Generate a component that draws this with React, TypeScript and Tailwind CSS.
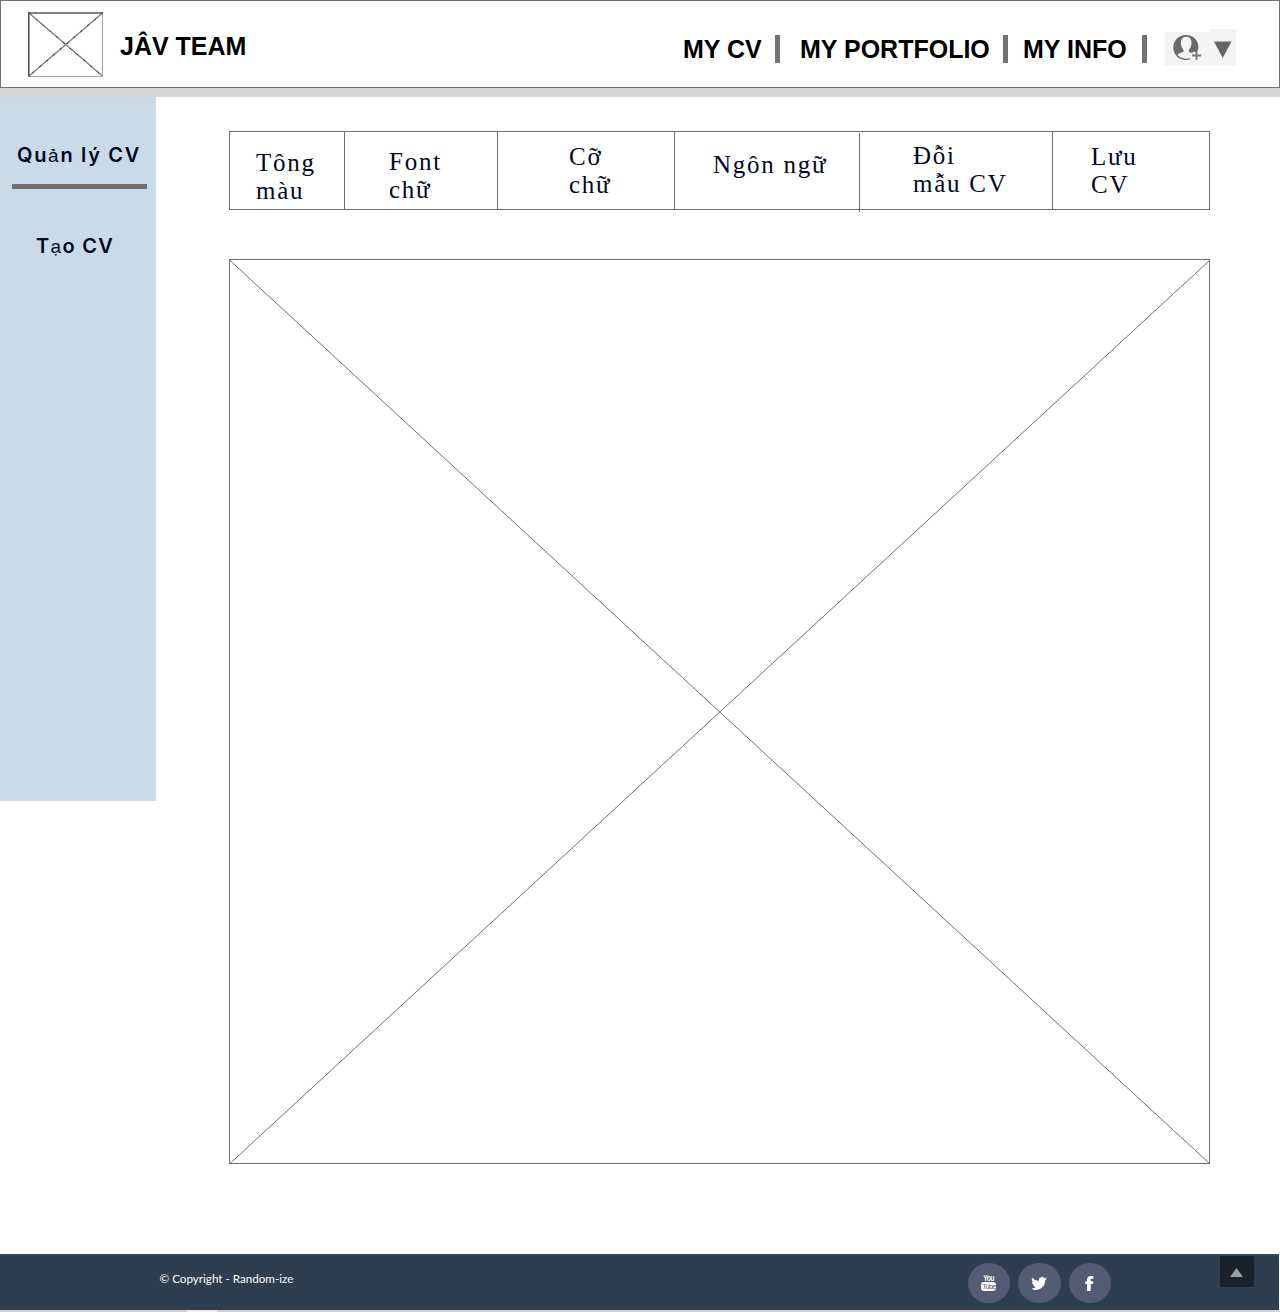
import type { ReactNode } from "react";

function Logo() {
  return (
    <svg className="ml-[27px] mt-[11px] h-[66px] w-[76px]" viewBox="0 0 76 66" fill="none">
      <path d="M1 1 74.500 64M74.500 1 1 64" stroke="#777" strokeWidth="1.2" />
      <path d="M1 1 74.500 64M74.500 1 1 64" stroke="#222" strokeWidth="1" strokeDasharray="2 7" />
      <path d="M74.500 1V65M1 64.500H75" stroke="#aaa" strokeWidth="1.200" />
      <path d="M.8 65V0M0 1H75" stroke="#5a5a5a" strokeWidth="1.600" />
    </svg>
  );
}

function Divider({ className }: { className: string }) {
  return <div className={`h-7 w-[5px] shrink-0 bg-[#737373] ${className}`} />;
}

function Account() {
  return (
    <div className="ml-[18px] mt-[28px] flex items-end">
      <svg className="h-[34px] w-[44px] bg-[#f4f4f4]" viewBox="0 0 44 34">
        <path
          fill="#6a6a6a"
          fillRule="evenodd"
          d="M21 3A12.500 12.500 0 0 0 8.300 15.500C8.300 22.500 14 28 21 28c1.500 0 3-.2 4.500-.8l-.5-.9c-4.500 1.200-9.500 0-12.800-3.600 1.500-1.300 4-1.800 5.800-2.600.8-.5.800-1.700.100-2.700-1.600-2.200-2.400-4.400-2.200-7 .2-3.500 2.200-5.600 5.300-5.600s5.200 2.100 5.300 5.600c.1 2.600-.8 4.800-2.300 7-.8 1.200-.6 2.300.5 2.800l3 1.100v-1.600h2.300l1.300 1.200c1.500-2 2.100-4 2.100-6.100C33.400 8.300 28 3 21 3Z"
        />
        <path d="M31.500 19v9M27 23.500h9" stroke="#777" strokeWidth="1.8" />
      </svg>
      <svg className="h-[37px] w-[27px] bg-[#f4f4f4]" viewBox="0 0 27 37">
        <path d="M5 12.500H22.500L13.700 29Z" fill="#666" />
      </svg>
    </div>
  );
}

function Header() {
  return (
    <header className="flex h-[97px] border-b-[9px] border-[#d6d6d6] font-['Liberation_Sans',sans-serif] text-[25px] leading-7 font-bold text-black">
      <div className="flex h-[88px] w-full items-start border border-[#707070] whitespace-nowrap">
        <Logo />
        <h1 className="mt-[31px] ml-[16px] w-[563px]">JÂV TEAM</h1>
        <div className="mt-[34px] w-[92px]">MY CV</div>
        <Divider className="mt-[34px]" />
        <div className="mt-[34px] ml-[20px] w-[203px]">MY PORTFOLIO</div>
        <Divider className="mt-[34px]" />
        <div className="mt-[34px] ml-[15px] w-[119px]">MY INFO</div>
        <Divider className="mt-[34px]" />
        <Account />
      </div>
    </header>
  );
}

function Sidebar() {
  return (
    <aside className="h-[704px] w-[156px] shrink-0 bg-[#c9dbe9] pt-[44px] font-[Inter,sans-serif] text-[20px] leading-7 font-semibold whitespace-nowrap text-[#00081f]">
      <div className="h-7 pl-[17px] tracking-[1.7px]">
        Qu<span className="font-['Liberation_Sans',sans-serif] text-[19px] font-normal">ả</span>n lý CV
      </div>
      <div className="mt-[15px] ml-[11.5px] h-[5px] w-[135px] bg-[#707070]" />
      <div className="mt-[43px] h-7 pl-[36px] tracking-[1.3px]">
        T<span className="font-['Liberation_Sans',sans-serif] text-[19px] font-normal">ạ</span>o CV
      </div>
    </aside>
  );
}

function Cell({ className, children }: { className: string; children: ReactNode }) {
  return <div className={`border-r border-[#707070] ${className}`}>{children}</div>;
}

function Toolbar() {
  return (
    <div className="flex h-[79px] w-[981px] border border-[#707070] font-['Liberation_Serif',serif] text-[25px] leading-7 tracking-[1.75px] whitespace-nowrap text-[#00081f]">
      <Cell className="w-[115px] pt-[17px] pl-[26px]">Tông<br />màu</Cell>
      <Cell className="w-[153px] pt-[16px] pl-[44px]">Font<br />chữ</Cell>
      <Cell className="w-[177px] pt-[11px] pl-[71px]">Cỡ<br />chữ</Cell>
      <Cell className="mt-px h-[79px] w-[185px] pt-[18px] pl-[38px]">Ngôn ngữ</Cell>
      <Cell className="w-[193px] pt-[10px] pl-[53px]">Đỗi<br />mẫu CV</Cell>
      <div className="pt-[11px] pl-[38px]">Lưu<br />CV</div>
    </div>
  );
}

function Canvas() {
  return (
    <div className="mt-[49px] h-[905px] w-[981px] border border-[#707070]">
      <svg className="size-full" viewBox="0 0 979 903" preserveAspectRatio="none">
        <path d="M0 .5 979.500 903.500M979.500 .5 0 903.500" stroke="#707070" strokeWidth="1" />
      </svg>
    </div>
  );
}

function Social({ children }: { children: ReactNode }) {
  return (
    <div className="flex h-[40px] w-[42.5px] items-center justify-center rounded-[50%] bg-[#525c73] text-white">
      {children}
    </div>
  );
}

function Footer() {
  return (
    <footer className="h-[58px] border-b-2 border-[#d3d3dc]">
      <div className="flex h-[56px] w-[1279px] items-start border-t-2 border-[#34495e] bg-[#2d3e50]">
        <div className="mt-[13px] ml-[159.5px] w-[808px] font-[Lato,sans-serif] text-[11.65px] leading-5 whitespace-nowrap text-white">
          © Copyright - Random-ize
        </div>
        <div className="mt-[7px] flex gap-[8px]">
          <Social>
            <div className="flex flex-col items-center font-['Liberation_Sans',sans-serif] font-bold">
              <span className="h-[7px] scale-x-80 text-[8.5px] leading-[7px] tracking-[-0.8px]">You</span>
              <span className="h-[9px] w-[15px] rounded-[3px] bg-white text-center text-[7.5px] leading-[9px] font-normal tracking-[-0.8px] text-[#525c73]">
                Tube
              </span>
            </div>
          </Social>
          <Social>
            <svg className="h-[13px] w-[16px]" viewBox="0 0 24 20" fill="currentColor">
              <path d="M24 2.400a10 10 0 0 1-2.800.8A5 5 0 0 0 23.300.5a10 10 0 0 1-3.100 1.200 4.900 4.900 0 0 0-8.400 4.500A14 14 0 0 1 1.700 1a4.900 4.900 0 0 0 1.500 6.600 5 5 0 0 1-2.200-.6 4.900 4.900 0 0 0 3.900 4.900 5 5 0 0 1-2.200.1 4.900 4.900 0 0 0 4.600 3.400A10 10 0 0 1 0 17.500 14 14 0 0 0 21.500 5 10 10 0 0 0 24 2.400Z" />
            </svg>
          </Social>
          <Social>
            <svg className="h-[15px] w-[9px]" viewBox="0 0 9 15" fill="currentColor">
              <path d="M2 15V8H.3V5.300H2V3.700C2 1.200 3.500 0 6 0h2.300v2.700H6.900c-1 0-1.200.4-1.200 1.200v1.400h2.600L8 8H5.700v7Z" />
            </svg>
          </Social>
        </div>
        <div className="ml-[109px] flex h-[31px] w-[34px] items-center justify-center rounded-[1px] bg-[#19222c]">
          <svg className="mt-[2px] mr-[1px] h-[9px] w-[13px]" viewBox="0 0 13 9">
            <path d="M6.500 0 13 9H0Z" fill="#9a9fa6" />
          </svg>
        </div>
      </div>
      <div className="ml-[187px] h-[2px] w-[30px] bg-[#eeeeee]" />
    </footer>
  );
}

export default function App() {
  return (
    <div className="flex h-[1312px] w-[1280px] flex-col overflow-hidden bg-white">
      <Header />
      <div className="flex h-[1157px] shrink-0">
        <Sidebar />
        <main className="ml-[73px] pt-[34px]">
          <Toolbar />
          <Canvas />
        </main>
      </div>
      <Footer />
    </div>
  );
}
